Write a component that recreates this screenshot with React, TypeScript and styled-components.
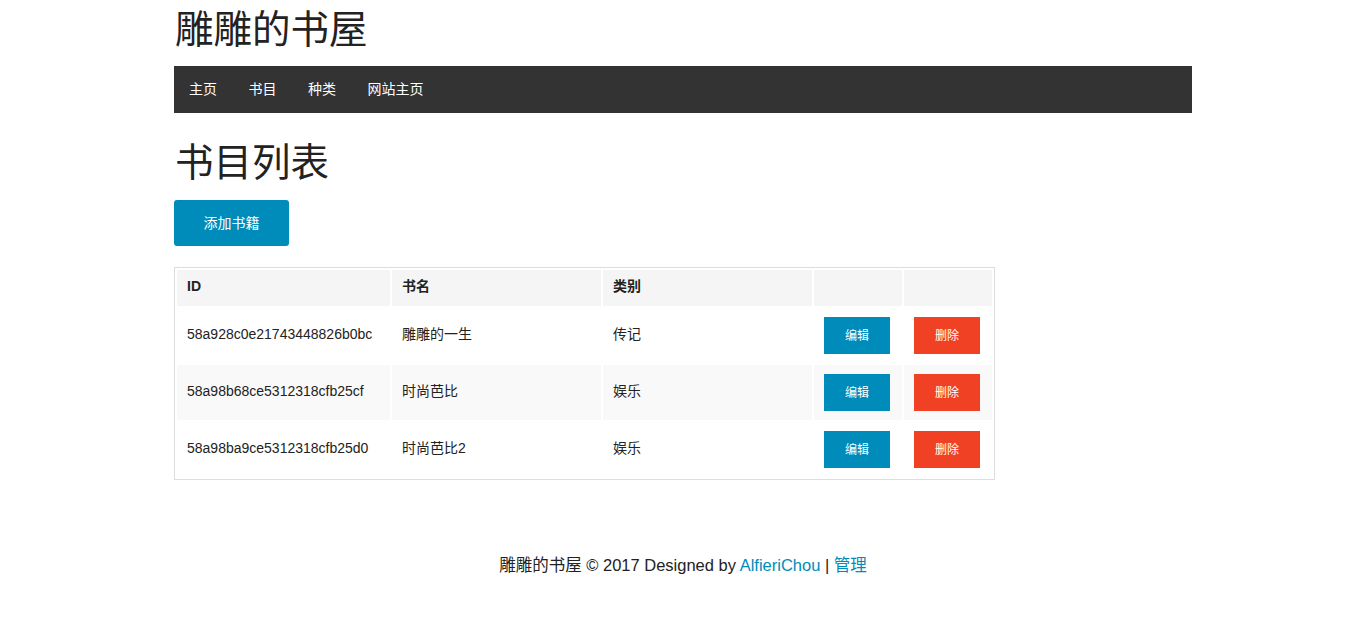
import React from 'react';
import styled, { createGlobalStyle } from 'styled-components';

const GlobalStyle = createGlobalStyle`
    * { box-sizing: border-box; }
    body {
        margin: 0;
        background: #fff;
        color: #222;
        font-family: "Liberation Sans", "Noto Sans CJK SC", sans-serif;
        font-size: 14px;
    }
`;

const Page = styled.div`
    width: 1018px;
    margin: 0 auto;
`;

const SiteTitle = styled.h1`
    margin: 0 0 6px;
    padding-left: 1px;
    font-family: "Liberation Serif", "Noto Sans CJK SC", serif;
    font-weight: 400;
    font-size: 38.5px;
    line-height: 60px;
    color: #222;
`;

const TopBar = styled.nav`
    height: 47px;
    background: #333;
    display: flex;
    align-items: center;
    padding: 0 0 4px 15px;
`;

const NavItem = styled.a`
    color: #fff;
    font-size: 14px;
    text-decoration: none;
    margin-right: 31.5px;
    cursor: pointer;
`;

const PageTitle = styled.h2`
    margin: 25px 0 12px;
    padding-left: 1px;
    font-family: "Liberation Serif", "Noto Sans CJK SC", serif;
    font-weight: 400;
    font-size: 38.5px;
    line-height: 50px;
    color: #222;
`;

const Button = styled.button<{ $tone?: 'primary' | 'alert'; $small?: boolean }>`
    display: inline-flex;
    align-items: center;
    justify-content: center;
    border: none;
    color: #fff;
    font-family: inherit;
    cursor: pointer;
    background: ${p => (p.$tone === 'alert' ? '#f04124' : '#008cba')};
    width: ${p => (p.$small ? '66px' : '115px')};
    height: ${p => (p.$small ? '37px' : '46px')};
    font-size: ${p => (p.$small ? '12px' : '14px')};
    border-radius: ${p => (p.$small ? '0' : '3px')};
    padding: 0 0 2px;
    vertical-align: top;
`;

const AddRow = styled.div`
    margin-bottom: 21px;
`;

const Table = styled.table`
    width: 821px;
    border: 1px solid #ddd;
    border-spacing: 2px;
    background: #fff;
`;

const Th = styled.th<{ $w: number }>`
    width: ${p => p.$w}px;
    background: #f5f5f5;
    padding: 7px 10px 11px;
    font-size: 14px;
    line-height: 18px;
    font-weight: 700;
    text-align: left;
    color: #222;
`;

const Tr = styled.tr<{ $striped?: boolean }>`
    background: ${p => (p.$striped ? '#f9f9f9' : '#fff')};
`;

const Td = styled.td`
    padding: 9px 10px;
    font-size: 14px;
    line-height: 18px;
    color: #222;
    height: 55px;
`;

const CellText = styled.span`
    display: block;
    margin-top: -4px;
`;

const Footer = styled.footer`
    margin-top: 73px;
    text-align: center;
    font-size: 16.5px;
    line-height: 24px;
    color: #222;
`;

const Link = styled.a`
    color: #008cba;
    text-decoration: none;
`;

const books = [
    { id: '58a928c0e21743448826b0bc', name: '雕雕的一生', kind: '传记' },
    { id: '58a98b68ce5312318cfb25cf', name: '时尚芭比', kind: '娱乐' },
    { id: '58a98ba9ce5312318cfb25d0', name: '时尚芭比2', kind: '娱乐' },
];

const App = () => {
    return (
        <>
            <GlobalStyle />
            <Page>
                <SiteTitle>雕雕的书屋</SiteTitle>
                <TopBar>
                    <NavItem>主页</NavItem>
                    <NavItem>书目</NavItem>
                    <NavItem>种类</NavItem>
                    <NavItem>网站主页</NavItem>
                </TopBar>

                <PageTitle>书目列表</PageTitle>
                <AddRow>
                    <Button $tone="primary">添加书籍</Button>
                </AddRow>

                <Table>
                    <thead>
                        <tr>
                            <Th $w={213}>ID</Th>
                            <Th $w={209}>书名</Th>
                            <Th $w={209}>类别</Th>
                            <Th $w={88}></Th>
                            <Th $w={88}></Th>
                        </tr>
                    </thead>
                    <tbody>
                        {books.map((b, i) => (
                            <Tr key={b.id} $striped={i % 2 === 1}>
                                <Td><CellText>{b.id}</CellText></Td>
                                <Td><CellText>{b.name}</CellText></Td>
                                <Td><CellText>{b.kind}</CellText></Td>
                                <Td><Button $small>编辑</Button></Td>
                                <Td><Button $small $tone="alert">删除</Button></Td>
                            </Tr>
                        ))}
                    </tbody>
                </Table>

                <Footer>
                    雕雕的书屋 © 2017 Designed by <Link>AlfieriChou</Link> | <Link>管理</Link>
                </Footer>
            </Page>
        </>
    );
};

export default App;
